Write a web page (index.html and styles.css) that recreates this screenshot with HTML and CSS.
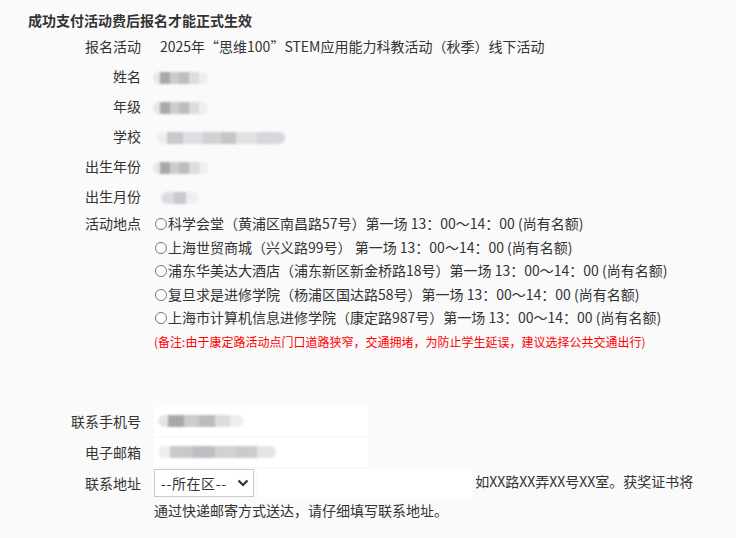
FILE: index.html
```html
<!DOCTYPE html>
<html lang="zh-CN">
<head>
<meta charset="UTF-8" />
<title>报名信息确认</title>
<link rel="stylesheet" href="styles.css">
</head>
<body>
<div class="page">
	<h3 class="title">成功支付活动费后报名才能正式生效</h3>
	<div class="form">
		<div class="row"><span class="lbl">报名活动</span><div class="val act">2025年“思维100”STEM应用能力科教活动（秋季）线下活动</div></div>
		<div class="row"><span class="lbl">姓名</span><div class="val"><span class="mask m-name"></span></div></div>
		<div class="row"><span class="lbl">年级</span><div class="val"><span class="mask m-grade"></span></div></div>
		<div class="row"><span class="lbl">学校</span><div class="val"><span class="mask m-school"></span></div></div>
		<div class="row"><span class="lbl">出生年份</span><div class="val"><span class="mask m-year"></span></div></div>
		<div class="row"><span class="lbl">出生月份</span><div class="val"><span class="mask m-month"></span></div></div>
		<div class="row place">
			<span class="lbl">活动地点</span>
			<div class="val">
				<label class="opt"><input type="radio" name="place" />科学会堂（黄浦区南昌路57号）第一场 13：00～14：00 (尚有名额)</label>
				<label class="opt"><input type="radio" name="place" />上海世贸商城（兴义路99号） 第一场 13：00～14：00 (尚有名额)</label>
				<label class="opt"><input type="radio" name="place" />浦东华美达大酒店（浦东新区新金桥路18号）第一场 13：00～14：00 (尚有名额)</label>
				<label class="opt"><input type="radio" name="place" />复旦求是进修学院（杨浦区国达路58号）第一场 13：00～14：00 (尚有名额)</label>
				<label class="opt"><input type="radio" name="place" />上海市计算机信息进修学院（康定路987号）第一场 13：00～14：00 (尚有名额)</label>
				<p class="note">(备注:由于康定路活动点门口道路狭窄，交通拥堵，为防止学生延误，建议选择公共交通出行)</p>
			</div>
		</div>
		<div class="row field first"><span class="lbl">联系手机号</span><div class="val"><div class="box"><span class="mask m-phone"></span></div></div></div>
		<div class="row field"><span class="lbl">电子邮箱</span><div class="val"><div class="box"><span class="mask m-mail"></span></div></div></div>
		<div class="row addr">
			<span class="lbl">联系地址</span>
			<div class="val wrap"><span class="pick"><select class="area"><option>--所在区--</option></select><svg class="chev" width="12" height="8" viewBox="0 0 12 8"><path d="M1.5 1.5 L6 6 L10.5 1.5" fill="none" stroke="#333" stroke-width="2.2"/></svg></span><input class="street" type="text" /> 如XX路XX弄XX号XX室。获奖证书将通过快递邮寄方式送达，请仔细填写联系地址。</div>
		</div>
	</div>
</div>
</body>
</html>
```
FILE: styles.css
```css
body{
	margin: 0;
	background: #fafafa;
	color: #333;
	font-family: "Noto Sans CJK SC", "Noto Sans", sans-serif;
	font-size: 14px;
}
.page{
	padding: 12px 0 0 28px;
}
.title{
	margin: 0 0 3px;
	font-size: 14px;
	line-height: 16px;
	font-weight: bold;
}
.row{
	display: grid;
	grid-template-columns: 113px 1fr;
	column-gap: 12px;
	height: 30px;
	align-items: center;
}
.lbl{
	text-align: right;
	white-space: nowrap;
}
.act{
	padding-left: 7px;
}
.mask{
	display: inline-block;
	height: 12px;
	vertical-align: middle;
	border-radius: 6px;
	filter: blur(1px);
	background: linear-gradient(90deg, #e6e6e6 0 12%, #a9a9a9 12% 30%, #cbcbcb 30% 48%, #bdbdbd 48% 66%, #dcdce2 66% 84%, #eeeeee 84% 100%);
}
.m-name, .m-grade, .m-year{
	width: 55px;
}
.m-school{
	width: 128px;
	margin-left: 4px;
	background: linear-gradient(90deg, #eeeeee 0 8%, #c9c9c9 8% 20%, #dedee6 20% 36%, #d2d2d2 36% 50%, #c6c6c6 50% 62%, #e2e2e2 62% 78%, #d6d6dc 78% 100%);
}
.m-month{
	width: 38px;
	margin-left: 8px;
	background: linear-gradient(90deg, #dcdce6 0 35%, #c8c8d0 35% 65%, #eceef2 65% 100%);
}
.m-phone{
	width: 86px;
	margin-left: 4px;
}
.m-mail{
	width: 118px;
	margin-left: 4px;
	background: linear-gradient(90deg, #eeeeee 0 10%, #c9c9c9 10% 30%, #bdbdc4 30% 48%, #d2d2d2 48% 66%, #cbcbcb 66% 84%, #e4e4e8 84% 100%);
}
.place{
	height: auto;
	align-items: start;
	margin-top: 1px;
}
.place .lbl{
	line-height: 23.6px;
}
.place .val{
	margin-left: 1px;
}
.opt{
	display: block;
	line-height: 23.6px;
	white-space: nowrap;
}
.opt input{
	appearance: none;
	width: 12px;
	height: 12px;
	margin: 0 1px 0 1px;
	border: 1px solid #777;
	border-radius: 50%;
	vertical-align: -1px;
	background: #fff;
}
.note{
	margin: 0;
	color: #f00;
	font-size: 12px;
	line-height: 24px;
}
.field{
	height: 29px;
	margin-bottom: 2px;
}
.field.first{
	margin-top: 53px;
}
.box{
	width: 214px;
	height: 29px;
	margin-left: 1px;
	background: #fff;
	display: flex;
	align-items: center;
}
.addr{
	height: auto;
	align-items: start;
	margin-top: -1px;
}
.addr .lbl{
	line-height: 30px;
}
.wrap{
	width: 546px;
	line-height: 26px;
	margin-left: 1px;
}
.pick{
	position: relative;
	display: inline-block;
	margin-right: 4px;
	vertical-align: middle;
}
.area{
	display: block;
	appearance: none;
	width: 100px;
	height: 28px;
	margin: 0;
	padding: 0 6px;
	border: 1px solid #ccc;
	border-radius: 0;
	background: #fff;
	color: #333;
	font-family: inherit;
	font-size: 14px;
	letter-spacing: 0.6px;
}
.chev{
	position: absolute;
	right: 5px;
	top: 10px;
	pointer-events: none;
}
.street{
	width: 214px;
	height: 28px;
	margin: 0;
	padding: 0;
	border: 0;
	background: #fff;
	vertical-align: middle;
	box-sizing: border-box;
}
```
